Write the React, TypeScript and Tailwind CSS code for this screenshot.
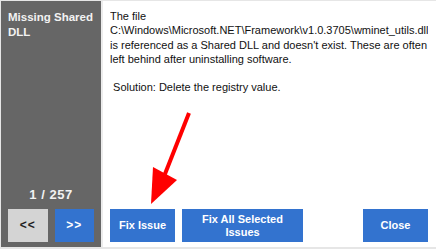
export default function App() {
  return (
    <div
      className="relative flex h-[249px] w-[436px] overflow-hidden border-t border-l border-b-2 border-[#e6e6e6] bg-white text-[11px] leading-[14.3px]"
      style={{ fontFamily: '"Liberation Sans", Arial, sans-serif' }}
    >
      <div className="flex w-[102px] flex-col border-r-2 border-[#ececec] bg-[#666666] px-[7px] pt-[9px] pb-[5px]">
        <h1 className="text-[11.5px] font-bold leading-[15px] text-[#f2f2f2]">Missing Shared DLL</h1>
        <div className="mt-auto text-center text-[13px] font-bold tracking-[0.5px] text-[#f2f2f2]">1 / 257</div>
        <div className="mt-[7px] flex gap-[7px]">
          <button className="h-[33px] w-[41px] bg-[#d4d4d4] text-[12px] font-bold tracking-[1px] text-[#222]">&lt;&lt;</button>
          <button className="h-[33px] w-[41px] bg-[#3373cf] text-[12px] font-bold tracking-[1px] text-white">&gt;&gt;</button>
        </div>
      </div>
      <div className="flex min-w-0 flex-1 flex-col pt-[8px] pl-[7px] pr-[8px] pb-[5px]">
        <div className="overflow-hidden text-[#111]">
          <p>The file</p>
          <p className="whitespace-nowrap">C:\Windows\Microsoft.NET\Framework\v1.0.3705\wminet_utils.dll</p>
          <p>is referenced as a Shared DLL and doesn't exist. These are often left behind after uninstalling software.</p>
          <p className="mt-[14px]">&nbsp;Solution: Delete the registry value.</p>
        </div>
        <div className="mt-auto flex gap-[7px]">
          <button className="h-[33px] w-[65px] bg-[#3373cf] font-bold text-white">Fix Issue</button>
          <button className="h-[33px] w-[121px] bg-[#3373cf] font-bold leading-[13px] text-white">
            Fix All Selected
            <br />
            Issues
          </button>
          <button className="ml-auto h-[33px] w-[65px] bg-[#3373cf] font-bold text-white">Close</button>
        </div>
      </div>
      <svg className="pointer-events-none absolute left-0 top-0" width="436" height="249">
        <line x1="188" y1="112" x2="162" y2="178" stroke="#ff0000" strokeWidth="4" />
        <polygon points="150,203 152,166 176,179" fill="#ff0000" />
      </svg>
    </div>
  );
}
